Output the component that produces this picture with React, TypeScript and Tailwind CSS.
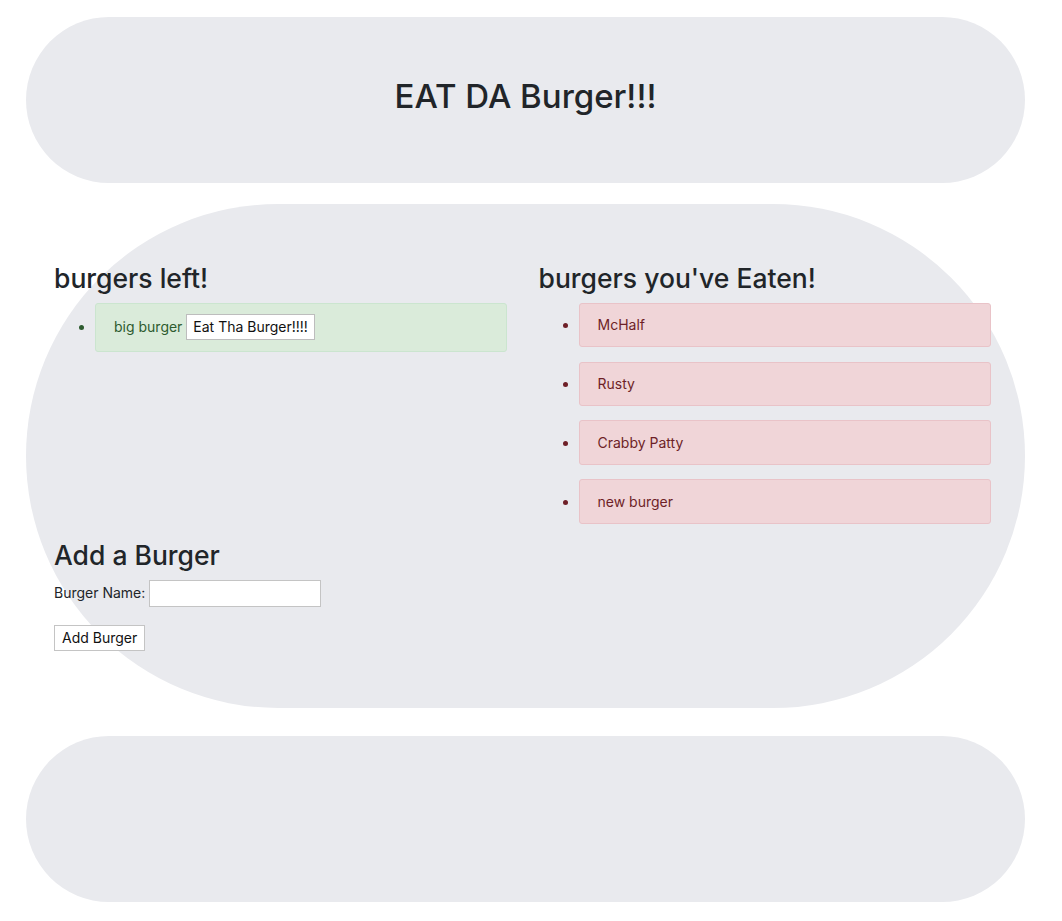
import { useState } from 'react'

type Burger = {
  id: number;
  name: string;
  devoured: boolean;
};

const initialBurgers: Burger[] = [
  { id: 1, name: 'McHalf', devoured: true },
  { id: 2, name: 'Rusty', devoured: true },
  { id: 3, name: 'Crabby Patty', devoured: true },
  { id: 4, name: 'new burger', devoured: true },
  { id: 5, name: 'big burger', devoured: false }
]

const font = { fontFamily: 'Inter, "Liberation Sans", sans-serif' }

export default function App() {
  const [burgers, setBurgers] = useState<Burger[]>(initialBurgers)
  const [name, setName] = useState('')

  const left = burgers.filter((b) => !b.devoured)
  const eaten = burgers.filter((b) => b.devoured)

  const eat = (id: number) => {
    setBurgers((list) => list.map((b) => (b.id === id ? { ...b, devoured: true } : b)))
  }

  const addBurger = () => {
    if (!name.trim()) return
    setBurgers((list) => [...list, { id: Date.now(), name: name.trim(), devoured: false }])
    setName('')
  }

  return (
    <div className="min-h-[921px] bg-white pt-[17px] text-[14px] leading-[21.6px] text-[#212529]" style={ font }>
      <div className="ml-[26px] w-[999px] rounded-full bg-[#e9eaee] px-[28.8px] py-[57.6px]">
        <h1 className="mb-[7.2px] text-center text-[33px] font-medium leading-[43.2px]">EAT DA Burger!!!</h1>
      </div>

      <div className="ml-[26px] mt-[21px] w-[999px] rounded-full bg-[#e9eaee] pb-[57.6px] pl-[28px] pr-[34px] pt-[57.6px]">
        <div className="grid grid-cols-2 gap-8">
          <div>
            <h2 className="mb-[7.2px] text-[26.5px] font-medium leading-[34.56px]">burgers left!</h2>
            <ul className="list-disc pl-[41px]">
              { left.map((b) => (
                <li
                  key={ b.id }
                  className="mb-[14.4px] rounded-[3px] border border-[#cbe5cf] bg-[#daebda] px-[18px] py-[10.5px] text-[#2d5b2f]"
                >
                  { b.name }{ ' ' }
                  <button
                    onClick={ () => eat(b.id) }
                    className="border border-[#bdbdbd] bg-white px-[6px] py-px text-[#111]"
                  >
                    Eat Tha Burger!!!!
                  </button>
                </li>
              )) }
            </ul>
          </div>
          <div>
            <h2 className="mb-[7.2px] text-[26.5px] font-medium leading-[34.56px]">burgers you've Eaten!</h2>
            <ul className="list-disc pl-[40px]">
              { eaten.map((b) => (
                <li
                  key={ b.id }
                  className="mb-[14.4px] rounded-[3px] border border-[#e9c3c8] bg-[#f0d5d8] px-[18px] py-[10.4px] text-[#6e1f27]"
                >
                  { b.name }
                </li>
              )) }
            </ul>
          </div>
        </div>

        <h2 className="mb-[7.2px] text-[26.5px] font-medium leading-[34.56px]">Add a Burger</h2>
        <div className="flex items-center">
          <label htmlFor="burger-name" className="mr-[4px]">Burger Name:</label>
          <input
            id="burger-name"
            value={ name }
            onChange={ (e) => setName(e.target.value) }
            className="h-[27px] w-[172px] border border-[#c4c4c4] bg-white px-1 outline-none"
          />
        </div>
        <button
          onClick={ addBurger }
          className="mt-[18px] h-[26px] border border-[#c4c4c4] bg-white px-[7px] text-[#111]"
        >
          Add Burger
        </button>
      </div>

      <div className="ml-[26px] mt-[28px] h-[166px] w-[999px] rounded-full bg-[#e9eaee]" />
    </div>
  )
}
